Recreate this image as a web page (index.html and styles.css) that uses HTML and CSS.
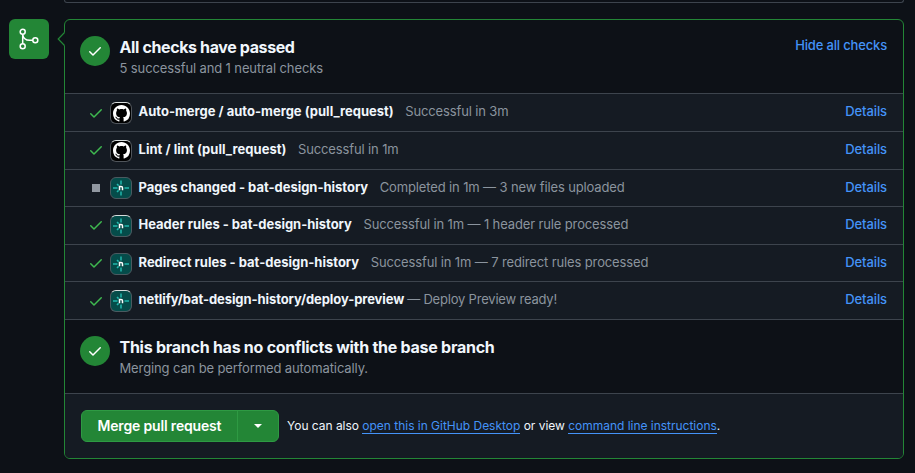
FILE: index.html
```html
<!DOCTYPE html>
<html lang="en">
<head>
<meta charset="utf-8">
<title>Merge pull request</title>
<link rel="stylesheet" href="styles.css">
</head>
<body>
<svg class="defs" aria-hidden="true">
  <symbol id="check" viewBox="0 0 16 16"><path d="M13.78 4.22a.75.75 0 0 1 0 1.06l-7.25 7.25a.75.75 0 0 1-1.06 0L2.22 9.28a.75.75 0 0 1 1.06-1.06L6 10.94l6.72-6.72a.75.75 0 0 1 1.06 0Z"/></symbol>
  <symbol id="github" viewBox="0 0 16 16"><path d="M8 0c4.42 0 8 3.58 8 8a8.013 8.013 0 0 1-5.45 7.59c-.4.08-.55-.17-.55-.38 0-.27.01-1.13.01-2.2 0-.75-.25-1.23-.54-1.48 1.78-.2 3.65-.88 3.65-3.95 0-.88-.31-1.59-.82-2.15.08-.2.36-1.02-.08-2.12 0 0-.67-.22-2.2.82-.64-.18-1.32-.27-2-.27-.68 0-1.36.09-2 .27-1.53-1.03-2.2-.82-2.2-.82-.44 1.1-.16 1.92-.08 2.12-.51.56-.82 1.28-.82 2.15 0 3.06 1.86 3.75 3.64 3.95-.23.2-.44.55-.51 1.07-.46.21-1.61.55-2.33-.66-.15-.24-.6-.83-1.23-.82-.67.01-.27.38.01.53.34.19.73.9.82 1.13.16.45.68 1.31 2.69.94 0 .67.01 1.3.01 1.49 0 .21-.15.45-.55.38A7.995 7.995 0 0 1 0 8c0-4.42 3.58-8 8-8Z"/></symbol>
  <symbol id="netlify" viewBox="0 0 22 22"><g fill="none" stroke="#20b8ad" stroke-width="1.5"><path d="M11 3.5v4M11 14.5v4M3 11h4.5M14.5 11H19M7 7l1.6 1.6M7 15l1.6-1.6"/></g><path d="M9.5 13.2V9.5h1.6q1.4 0 1.4 1.3v2.4" fill="none" stroke="#fff" stroke-width="1.5"/></symbol>
</svg>
<div class="previous"></div>
<main class="merge">
  <div class="branch-icon"><svg width="24" height="24" viewBox="0 0 24 24" fill="none" stroke="#fff" stroke-width="1.5"><circle cx="5.7" cy="4.8" r="2.5"/><circle cx="5.7" cy="19.2" r="2.5"/><circle cx="18.3" cy="13.2" r="2.5"/><path d="M5.7 7.3v9.4M5.7 7.3c.5 4 3.6 5.9 7 5.9h3.1"/></svg></div>
  <section class="box">
    <svg class="caret" width="9" height="16" viewBox="0 0 9 16"><path class="caret-fill" d="M8.5 1.5H7.5L1.2 8l6.3 6.5h1z"/><path class="caret-line" d="M7.5 1.5 1.2 8l6.3 6.5"/></svg>
    <div class="status">
      <span class="circle"><svg width="16" height="16"><use href="#check"/></svg></span>
      <div class="copy"><h2 class="t1">All checks have passed</h2><p class="s1">5 successful and 1 neutral checks</p></div>
      <a class="hide">Hide all checks</a>
    </div>
    <div class="row high"><svg class="ok"><use href="#check"/></svg><span class="avatar gh"><svg><use href="#github"/></svg></span><strong class="n1">Auto-merge / auto-merge (pull_request)</strong><span class="meta m1">Successful in 3m</span><a>Details</a></div>
    <div class="row"><svg class="ok"><use href="#check"/></svg><span class="avatar gh"><svg><use href="#github"/></svg></span><strong class="n2">Lint / lint (pull_request)</strong><span class="meta m2">Successful in 1m</span><a>Details</a></div>
    <div class="row"><span class="neutral"></span><span class="avatar"><svg><use href="#netlify"/></svg></span><strong class="n3">Pages changed - bat-design-history</strong><span class="meta m3">Completed in 1m — 3 new files uploaded</span><a>Details</a></div>
    <div class="row"><svg class="ok"><use href="#check"/></svg><span class="avatar bright"><svg><use href="#netlify"/></svg></span><strong class="n4">Header rules - bat-design-history</strong><span class="meta m4">Successful in 1m — 1 header rule processed</span><a>Details</a></div>
    <div class="row"><svg class="ok"><use href="#check"/></svg><span class="avatar"><svg><use href="#netlify"/></svg></span><strong class="n5">Redirect rules - bat-design-history</strong><span class="meta m5">Successful in 1m — 7 redirect rules processed</span><a>Details</a></div>
    <div class="row high"><svg class="ok"><use href="#check"/></svg><span class="avatar bright"><svg><use href="#netlify"/></svg></span><strong class="n6">netlify/bat-design-history/deploy-preview</strong><span class="meta m6">— Deploy Preview ready!</span><a>Details</a></div>
    <div class="status conflicts">
      <span class="circle"><svg width="16" height="16"><use href="#check"/></svg></span>
      <div class="copy"><h2 class="t2">This branch has no conflicts with the base branch</h2><p class="s2">Merging can be performed automatically.</p></div>
    </div>
    <div class="actions">
      <div class="button"><span class="label"><b>Merge pull request</b></span><span class="drop"></span></div>
      <p class="hint">You can also <a>open this in GitHub Desktop</a> or view <a>command line instructions</a>.</p>
    </div>
  </section>
</main>
</body>
</html>
```
FILE: styles.css
```css
* { box-sizing: border-box; }
body { margin: 0; height: 473px; overflow: hidden; background: #0d1117; color: #f0f6fc; font: 13px/20px Inter, "Liberation Sans", sans-serif; }
h2, p { margin: 0; }
a { color: #4493f8; }
.defs { position: absolute; width: 0; height: 0; }
.previous { width: 840px; height: 3px; margin-left: 64px; border: 1px solid #3d444d; border-top: 0; border-radius: 0 0 6px 6px; }
.merge { display: flex; align-items: flex-start; gap: 15px; margin: 16px 0 0 9px; }
.branch-icon { display: flex; align-items: center; justify-content: center; width: 40px; height: 40px; border-radius: 6px; background: #238636; }
.box { position: relative; display: flex; flex-direction: column; width: 840px; height: 440px; border: 1px solid #238636; border-radius: 6px; }
.caret { position: absolute; left: -8px; top: 11px; }
.caret-fill { fill: #0d1117; }
.caret-line { fill: none; stroke: #238636; stroke-width: 1.2; }
.status { display: flex; flex: none; align-items: flex-start; height: 73.4px; padding: 16px 16px 0 15px; }
.circle { display: flex; align-items: center; justify-content: center; width: 30px; height: 30px; margin-right: 9.5px; border-radius: 50%; background: #238636; fill: #fff; }
.copy { white-space: nowrap; }
h2 { font-size: 16px; line-height: 22px; font-weight: 700; }
.t1 { letter-spacing: -.38px; }
.t2 { letter-spacing: -.26px; }
.copy p { color: #8b949e; line-height: 20px; letter-spacing: -.12px; }
.hide { margin: -1px 0 0 auto; white-space: nowrap; font-weight: 500; letter-spacing: -.16px; }
.row { display: flex; flex: none; align-items: center; height: 37.6px; padding: 0 16px 2px 23px; border-top: 1px solid #3d444d; background: #151b23; white-space: nowrap; }
.row a { margin-left: auto; font-weight: 500; letter-spacing: -.1px; }
.high { padding-bottom: 3px; }
.high .ok, .high .avatar { position: relative; top: .5px; }
.ok { width: 16px; height: 16px; margin: 2px 6px 0 0; fill: #3fb950; }
.neutral { width: 8px; height: 8px; margin: 2px 10px 0 4px; background: #9198a1; }
.avatar { display: flex; align-items: center; justify-content: center; width: 22px; height: 22px; margin: 3px 6.5px 0 0; border: 1px solid #4b5a60; border-radius: 6px; background: #054c4a; }
.avatar svg { flex: none; width: 22px; height: 22px; }
.bright { border-top-color: #d7dcdc; }
.gh { background: #000; border-color: #50555b; border-top-color: #d7dcdc; fill: #fff; }
.gh svg { width: 17px; height: 17px; }
.row strong { font-weight: 700; letter-spacing: -.02px; }
.row .n1, .row .n5 { letter-spacing: 0; }
.row .n2 { letter-spacing: .04px; }
.row .n6 { letter-spacing: -.085px; }
.meta { color: #8b949e; margin-left: 11.5px; letter-spacing: -.13px; }
.m6 { margin-left: 3px; letter-spacing: -.2px; }
.conflicts { height: 74px; border-top: 1px solid #3d444d; }
.actions { display: flex; flex: 1; align-items: center; padding: 0 16px; border-top: 1px solid #3d444d; border-radius: 0 0 5px 5px; background: #151b23; }
.button { display: flex; width: 198px; height: 32px; border: 1px solid #2e9a43; border-radius: 6px; background: #238636; color: #fff; }
.label { width: 156px; border-right: 1px solid #2e9a43; padding-left: 15.5px; font-size: 14px; line-height: 30px; white-space: nowrap; }
.label b { font-weight: 600; letter-spacing: -.17px; }
.drop { margin: auto; border: 4px solid transparent; border-top-color: #fff; border-bottom: 0; }
.hint { margin-left: 8px; font-size: 12px; white-space: nowrap; letter-spacing: -.02px; }
.hint a { border-bottom: 1px solid #4493f8; }
```
